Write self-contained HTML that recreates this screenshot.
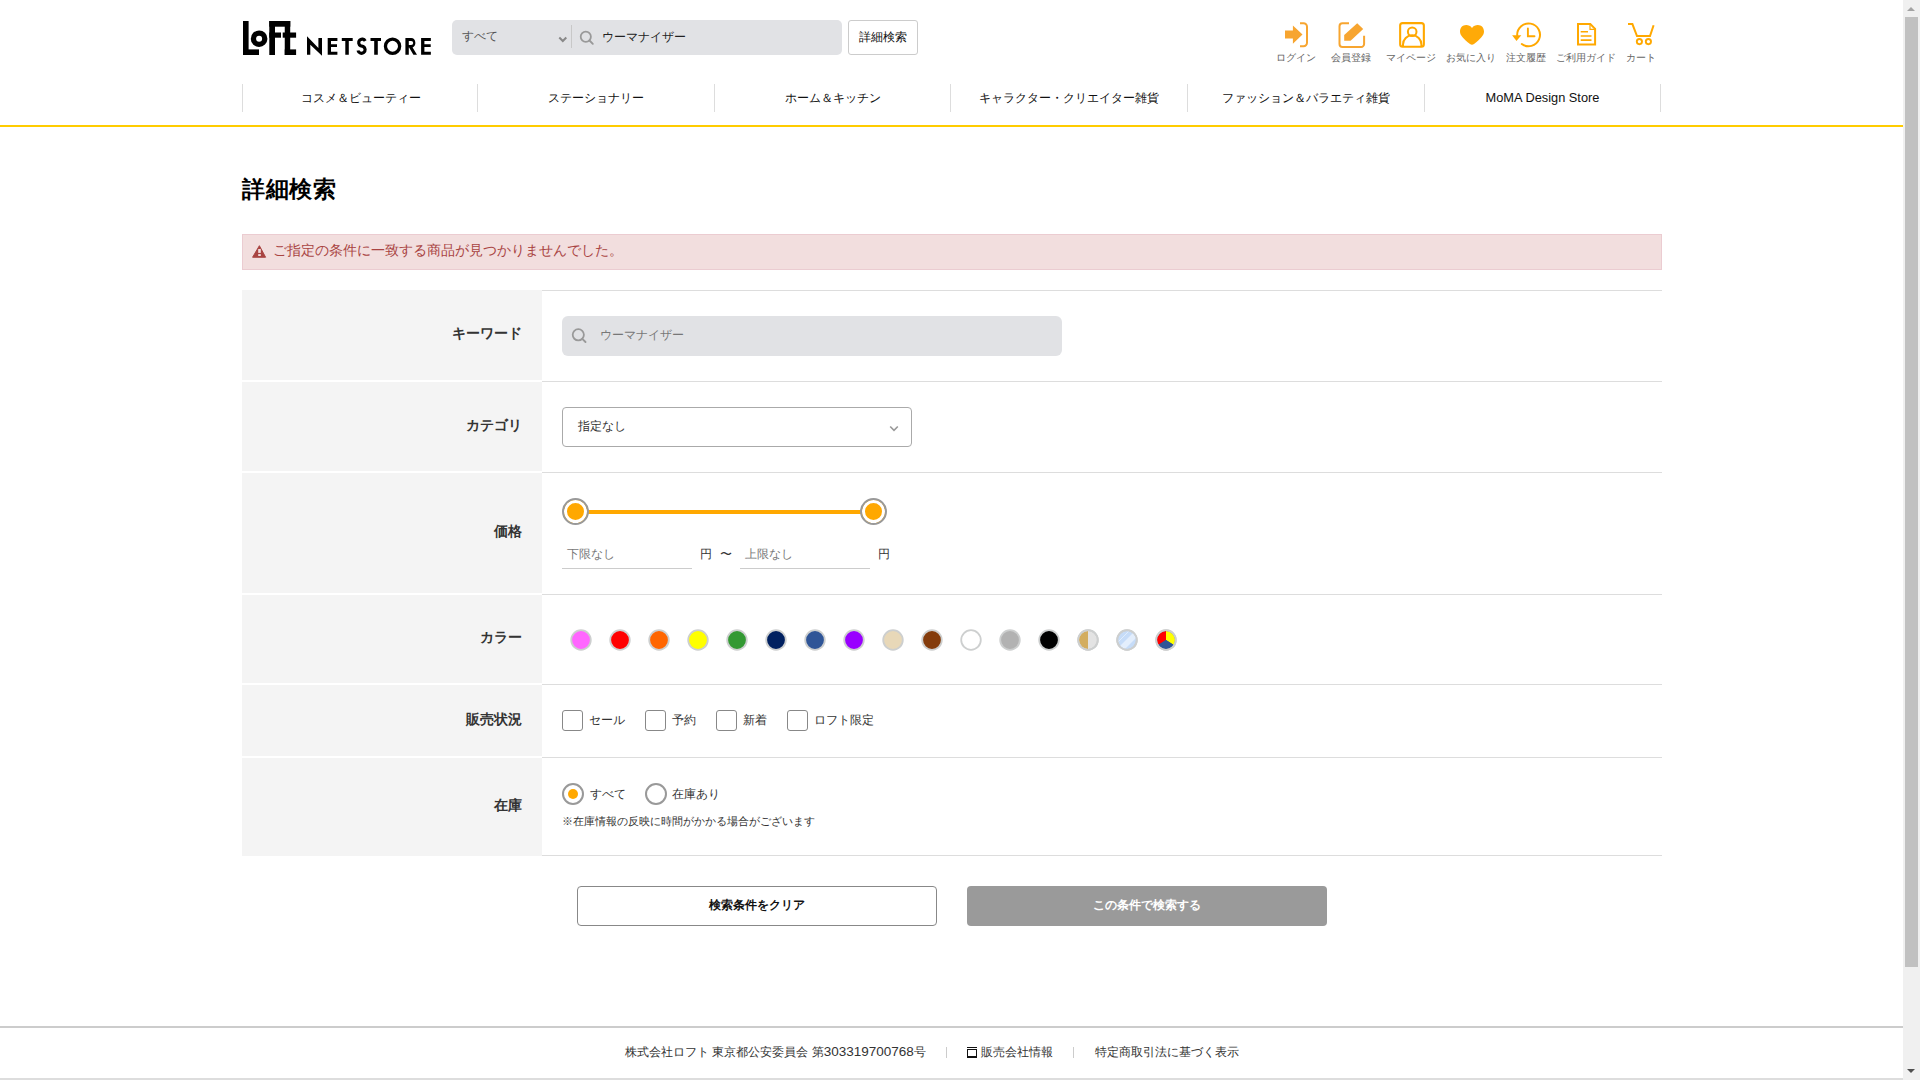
<!DOCTYPE html>
<html lang="ja">
<head>
<meta charset="utf-8">
<title>詳細検索 | ロフト公式通販サイト</title>
<style>
*{box-sizing:border-box;margin:0;padding:0}
html,body{width:1920px;height:1080px;overflow:hidden;background:#fff}
body{font-family:"Liberation Sans",sans-serif;color:#222;position:relative}
.abs{position:absolute}
#sb{position:absolute;left:1903px;top:0;width:17px;height:1080px;background:#f0f0f0}
#sb .thumb{position:absolute;left:2px;top:17px;width:13px;height:950px;background:#c1c1c1}
#sb .up{position:absolute;left:4px;top:7px;width:0;height:0;border-left:4px solid transparent;border-right:4px solid transparent;border-bottom:4px solid #a3a3a3}
#sb .dn{position:absolute;left:4px;top:1069px;width:0;height:0;border-left:4px solid transparent;border-right:4px solid transparent;border-top:4px solid #505050}
/* header */
.search{left:452px;top:20px;width:390px;height:35px;background:#e1e2e5;border-radius:5px}
.search .sel{position:absolute;left:10px;top:0;line-height:33px;font-size:12px;color:#555}
.search .div{position:absolute;left:119px;top:5px;width:1px;height:23px;background:#c8c8c8}
.search .txt{position:absolute;left:150px;top:0;line-height:34px;font-size:12px;color:#222}
.dbtn{left:848px;top:20px;width:70px;height:35px;border:1px solid #ccc;border-radius:3px;font-size:12px;line-height:33px;text-align:center;color:#111}
.ic{top:0;width:60px;height:70px}
.ic svg{position:absolute;left:0;top:0}
.ic span{position:absolute;left:-10px;width:80px;top:50px;font-size:10px;text-align:center;color:#777;line-height:14px;white-space:nowrap}
.nav{left:242px;top:84px;width:1420px;height:28px}
.nav div{position:absolute;top:0;height:28px;border-left:1px solid #ddd;font-size:12px;line-height:28px;text-align:center;color:#111}
.lbl{top:51px;width:80px;font-size:10px;line-height:14px;text-align:center;color:#666;white-space:nowrap}
.yl{left:0;top:125px;width:1903px;height:2px;background:#fc0}
h1{position:absolute;left:242px;top:174px;font-size:23px;line-height:30px;font-weight:bold;color:#000;letter-spacing:.6px}
.alert{left:242px;top:234px;width:1420px;height:36px;background:#f2dede;border:1px solid #ebccd1;color:#a94442;font-size:14px;line-height:31px;padding-left:30px}
.th{left:242px;width:300px;background:#f4f4f4;font-size:14px;font-weight:bold;text-align:right;padding-right:20px;color:#333}
.td{left:542px;width:1120px;border-top:1px solid #ddd}

.kw{left:562px;top:316px;width:500px;height:40px;background:#e1e2e5;border-radius:6px}
.kw span{position:absolute;left:38px;top:0;line-height:39px;font-size:12px;color:#777}
.cat{left:562px;top:407px;width:350px;height:40px;border:1px solid #aaa;border-radius:4px}
.cat span{position:absolute;left:15px;top:0;line-height:36px;font-size:12px;color:#333}
.hdl{width:27px;height:27px;border-radius:50%;border:2px solid #999;background:#ffa800;box-shadow:inset 0 0 0 3px #fff}
.pin{top:544px;width:130px;height:25px;border-bottom:1px solid #ccc;font-size:12px;line-height:20px;padding-left:5px;color:#777}
.yen{top:544px;font-size:12px;line-height:20px;color:#333}
.cb{top:710px;width:21px;height:21px;border:1px solid #888;border-radius:3px;background:#fff}
.cbl{top:710px;font-size:12px;line-height:20px;color:#333}
.rd{top:783px;width:22px;height:22px;border:2px solid #999;border-radius:50%;background:#fff}
.rd i{position:absolute;left:4px;top:4px;width:10px;height:10px;border-radius:50%;background:#ffa800}
.rdl{top:784px;font-size:12px;line-height:20px;color:#333}
.note{left:562px;top:813px;font-size:11px;line-height:16px;color:#333}
.btn1{left:577px;top:886px;width:360px;height:40px;border:1px solid #888;border-radius:4px;font-size:12px;font-weight:bold;text-align:center;line-height:36px;color:#111}
.btn2{left:967px;top:886px;width:360px;height:40px;border-radius:4px;background:#9a9a9a;font-size:12px;font-weight:bold;text-align:center;line-height:38px;color:#fff}
.ft{top:1043px;font-size:12px;line-height:18px;color:#333;white-space:nowrap}
</style>
</head>
<body>
<div id="sb"><div class="up"></div><div class="thumb"></div><div class="dn"></div></div>

<!-- logo -->
<svg class="abs" style="left:0;top:0" width="440" height="70" viewBox="0 0 440 70">
  <g fill="#000">
    <rect x="243" y="21" width="5.6" height="34"/>
    <rect x="243" y="49.4" width="16" height="5.6"/>
    <circle cx="259.1" cy="38.7" r="8.3"/>
    <rect x="269.3" y="21" width="5.7" height="34"/>
    <rect x="269.3" y="21" width="21" height="5.7"/>
    <rect x="269.3" y="32.5" width="11.7" height="5.2"/>
    <rect x="284.75" y="21" width="5.45" height="34"/>
    <rect x="282.7" y="32.5" width="13.4" height="5.2"/>
    <rect x="284.75" y="49.4" width="11.35" height="5.6"/>
  </g>
  <circle cx="259.1" cy="38.7" r="3" fill="#fff"/>
  <g fill="#000">
    <path d="M307 36.3L318.4 48V38.1H322V55.7L310.3 44.7V54.8H307Z"/>
    <path d="M327.7 38.1H337.4V41H331V44.2H337V47H331V51.8H337.4V54.8H327.7Z"/>
    <path d="M341.8 38H352.7V41H348.8V54.8H345.3V41H341.8Z"/>
    <path d="M370.5 38H381V41H377.8V54.8H374.2V41H370.5Z"/>
    <path d="M405.4 38.1H411.2A4.2 4.8 0 0 1 412.6 47.4L417 54.8H413.4L409.1 47.6H408.8V54.8H405.4ZM408.8 40.9V45.1H411.1A2.1 2.1 0 0 0 411.1 40.9Z" fill-rule="evenodd"/>
    <path d="M421.1 38.1H430.85V41H424.4V44.2H430.7V47H424.4V51.8H430.85V54.8H421.1Z"/>
  </g>
  <g fill="none" stroke="#000">
    <path d="M365.2 41A3.45 3.45 0 1 0 360.6 45.7L363.2 46.5A3.6 3.6 0 1 1 358 50.5" stroke-width="3.2"/>
    <circle cx="392.55" cy="46.25" r="7.1" stroke-width="3.3"/>
  </g>
</svg>

<div class="abs search"><span class="sel">すべて</span><svg width="10" height="8" viewBox="0 0 10 8" style="position:absolute;left:105.5px;top:15.5px"><path d="M1.3 1.5l3.5 3.5 3.5-3.5" fill="none" stroke="#888" stroke-width="2"/></svg><div class="div"></div><svg width="20" height="20" viewBox="0 0 20 20" style="position:absolute;left:126px;top:9px"><circle cx="7.8" cy="7.8" r="5.1" fill="none" stroke="#999" stroke-width="1.8"/><path d="M11.5 11.5l3.3 3.3" stroke="#999" stroke-width="1.9" stroke-linecap="round"/></svg><span class="txt">ウーマナイザー</span></div>
<div class="abs dbtn">詳細検索</div>


<svg class="abs" style="left:1270px;top:10px" width="400" height="45" viewBox="1270 10 400 45">
  <g fill="#f7a530">
    <path d="M1285 30.4h7.9v-5l9.6 9.2-9.6 9.2v-5.2h-7.9z"/>
  </g>
  <path d="M1300 23.3h3.5a3.5 3.5 0 0 1 3.5 3.5v15.9a3.5 3.5 0 0 1-3.5 3.5h-3.5" fill="none" stroke="#f7a530" stroke-width="2"/>
  <path d="M1349 23.3h-6.5a3 3 0 0 0-3 3v17.7a3 3 0 0 0 3 3h18.6a3 3 0 0 0 3-3v-8.2" fill="none" stroke="#f7a530" stroke-width="2"/>
  <path d="M1344.2 40.7v-5.6l13-11.9 6 5.9-12.6 11.6z" fill="#f7a530"/>
  <rect x="1400.15" y="23.1" width="23.7" height="23.65" rx="2.5" fill="none" stroke="#ffa800" stroke-width="2.1"/>
  <circle cx="1412.2" cy="31.8" r="4.3" fill="none" stroke="#ffa800" stroke-width="2"/>
  <path d="M1403 46.5v-2a9.2 9.2 0 0 1 18.4 0v2" fill="none" stroke="#ffa800" stroke-width="2"/>
  <path d="M1472 28C1470.5 25.8 1468.5 25 1466.2 25C1462.5 25 1460 27.8 1460 31.5C1460 35.5 1463.5 38.8 1470 44C1471.3 45 1472.7 45 1474 44C1480.5 38.8 1484 35.5 1484 31.5C1484 27.8 1481.5 25 1477.8 25C1475.5 25 1473.5 25.8 1472 28Z" fill="#ffaa08"/>
  <path d="M1517.2 35.3A11.4 11.4 0 1 1 1521.8 44" fill="none" stroke="#ffa800" stroke-width="2" stroke-linecap="round"/>
  <path d="M1512.1 35.2H1521.3L1516.5 40.9z" fill="#ffa800"/>
  <path d="M1527.9 28.4v7.9h6.6" fill="none" stroke="#ffa800" stroke-width="1.9" stroke-linecap="round"/>
  <path d="M1578 24.1h12.3l4.8 4.8v15.7h-17.1z" fill="none" stroke="#ffa800" stroke-width="2"/>
  <path d="M1590 24v5.3h5.2" fill="none" stroke="#ffa800" stroke-width="1.2"/>
  <path d="M1580.7 31.8h7.3M1580.7 36h10.8M1580.7 40.1h10.8" stroke="#ffa800" stroke-width="1.6"/>
  <path d="M1628 24.1h4.4l4.6 11.9h13l3.6-10.8" fill="none" stroke="#ffa800" stroke-width="2"/>
  <circle cx="1639.4" cy="41.6" r="2.6" fill="none" stroke="#ffa800" stroke-width="1.9"/>
  <circle cx="1648.4" cy="41.6" r="2.6" fill="none" stroke="#ffa800" stroke-width="1.9"/>
</svg>
<div class="abs lbl" style="left:1256px">ログイン</div>
<div class="abs lbl" style="left:1311px">会員登録</div>
<div class="abs lbl" style="left:1371px">マイページ</div>
<div class="abs lbl" style="left:1431px">お気に入り</div>
<div class="abs lbl" style="left:1486px">注文履歴</div>
<div class="abs lbl" style="left:1546px">ご利用ガイド</div>
<div class="abs lbl" style="left:1601px">カート</div>

<div class="abs nav">
  <div style="left:0;width:236px">コスメ＆ビューティー</div>
  <div style="left:235px;width:237px">ステーショナリー</div>
  <div style="left:472px;width:236px">ホーム＆キッチン</div>
  <div style="left:708px;width:237px">キャラクター・クリエイター雑貨</div>
  <div style="left:945px;width:237px">ファッション＆バラエティ雑貨</div>
  <div style="left:1182px;width:237px;border-right:1px solid #ddd"><span style="font-size:12.8px">MoMA Design Store</span></div>
</div>
<div class="abs yl"></div>

<h1>詳細検索</h1>
<div class="abs alert"><svg width="16" height="15" viewBox="0 0 16 15" style="position:absolute;left:9px;top:10px"><path d="M7.4 0.7L13.6 12.25H0.6z" fill="#a94442" stroke="#a94442" stroke-width="1" stroke-linejoin="round"/><rect x="6.2" y="4" width="2.6" height="3.9" fill="#f2dede"/><rect x="6.2" y="9.1" width="2.6" height="1.9" fill="#f2dede"/></svg>ご指定の条件に一致する商品が見つかりませんでした。</div>

<div class="abs th" style="top:290px;height:90px;line-height:86px">キーワード</div>
<div class="abs td" style="top:290px;height:91px"></div>
<div class="abs th" style="top:382px;height:89px;line-height:86px">カテゴリ</div>
<div class="abs td" style="top:381px;height:91px"></div>
<div class="abs th" style="top:473px;height:120px;line-height:116px">価格</div>
<div class="abs td" style="top:472px;height:122px"></div>
<div class="abs th" style="top:595px;height:88px;line-height:84px">カラー</div>
<div class="abs td" style="top:594px;height:90px"></div>
<div class="abs th" style="top:685px;height:71px;line-height:68px">販売状況</div>
<div class="abs td" style="top:684px;height:73px"></div>
<div class="abs th" style="top:758px;height:98px;line-height:94px">在庫</div>
<div class="abs td" style="top:757px;height:99px;border-bottom:1px solid #ddd"></div>


<!-- keyword -->
<div class="abs kw"><svg width="20" height="20" viewBox="0 0 20 20" style="position:absolute;left:8px;top:10px"><circle cx="8.3" cy="8.8" r="5.6" fill="none" stroke="#999" stroke-width="1.8"/><path d="M12.3 12.8l3.2 3.2" stroke="#999" stroke-width="1.9" stroke-linecap="round"/></svg><span>ウーマナイザー</span></div>
<!-- category -->
<div class="abs cat"><span>指定なし</span><svg width="10" height="8" viewBox="0 0 10 8" style="position:absolute;left:326px;top:17px"><path d="M1.2 1.5l3.8 3.8 3.8-3.8" fill="none" stroke="#999" stroke-width="1.6"/></svg></div>
<!-- price -->
<div class="abs" style="left:575px;top:510px;width:298px;height:4px;background:#ffa800"></div>
<div class="abs hdl" style="left:562px;top:498px"></div>
<div class="abs hdl" style="left:860px;top:498px"></div>
<div class="abs pin" style="left:562px">下限なし</div>
<div class="abs yen" style="left:700px">円</div>
<div class="abs yen" style="left:720px">〜</div>
<div class="abs pin" style="left:740px">上限なし</div>
<div class="abs yen" style="left:878px">円</div>
<!-- colors -->
<svg class="abs" style="left:560px;top:620px" width="630" height="40" viewBox="560 620 630 40">
  <defs>
    <clipPath id="cc"><circle cx="1088" cy="640" r="9"/></clipPath>
    <clipPath id="cl"><circle cx="1127" cy="640" r="9"/></clipPath>
    <clipPath id="ct"><circle cx="1166" cy="640" r="9"/></clipPath>
  </defs>
  <g stroke="#cdcfcf" stroke-width="1.8">
    <circle cx="581" cy="640" r="9.8" fill="#ff66ff"/>
    <circle cx="620" cy="640" r="9.8" fill="#ff0000"/>
    <circle cx="659" cy="640" r="9.8" fill="#ff6600"/>
    <circle cx="698" cy="640" r="9.8" fill="#ffff00"/>
    <circle cx="737" cy="640" r="9.8" fill="#339933"/>
    <circle cx="776" cy="640" r="9.8" fill="#002060"/>
    <circle cx="815" cy="640" r="9.8" fill="#2f5597"/>
    <circle cx="854" cy="640" r="9.8" fill="#9900ff"/>
    <circle cx="893" cy="640" r="9.8" fill="#e8d8b8"/>
    <circle cx="932" cy="640" r="9.8" fill="#843c0c"/>
    <circle cx="971" cy="640" r="9.8" fill="#ffffff"/>
    <circle cx="1010" cy="640" r="9.8" fill="#b2b2b2"/>
    <circle cx="1049" cy="640" r="9.8" fill="#000000"/>
    <circle cx="1088" cy="640" r="9.8" fill="#e3e3e3"/>
    <circle cx="1127" cy="640" r="9.8" fill="#c6dcf8"/>
    <circle cx="1166" cy="640" r="9.8" fill="#2f5597"/>
  </g>
  <rect x="1078" y="630" width="10" height="20" fill="#d3ad5f" clip-path="url(#cc)"/>
  <g clip-path="url(#cl)" stroke="#e3eefc"><path d="M1132 628L1108 652" stroke-width="0.9"/><path d="M1142 628L1118 652" stroke-width="5.7"/></g>
  <g clip-path="url(#ct)"><path d="M1166 640V630H1150V650z" fill="#ff0000"/><path d="M1166 640V630H1182V650z" fill="#ffff00"/><path d="M1166 640L1150 650H1182z" fill="#2f5597"/></g>
  <circle cx="1088" cy="640" r="9.8" fill="none" stroke="#cdcfcf" stroke-width="1.8"/>
  <circle cx="1127" cy="640" r="9.8" fill="none" stroke="#cdcfcf" stroke-width="1.8"/>
  <circle cx="1166" cy="640" r="9.8" fill="none" stroke="#cdcfcf" stroke-width="1.8"/>
</svg>
<!-- checkboxes -->
<div class="abs cb" style="left:562px"></div><div class="abs cbl" style="left:589px">セール</div>
<div class="abs cb" style="left:645px"></div><div class="abs cbl" style="left:672px">予約</div>
<div class="abs cb" style="left:716px"></div><div class="abs cbl" style="left:743px">新着</div>
<div class="abs cb" style="left:787px"></div><div class="abs cbl" style="left:814px">ロフト限定</div>
<!-- radios -->
<div class="abs rd" style="left:562px"><i></i></div><div class="abs rdl" style="left:590px">すべて</div>
<div class="abs rd" style="left:645px"></div><div class="abs rdl" style="left:672px">在庫あり</div>
<div class="abs note">※在庫情報の反映に時間がかかる場合がございます</div>
<!-- buttons -->
<div class="abs btn1">検索条件をクリア</div>
<div class="abs btn2">この条件で検索する</div>
<!-- footer -->
<div class="abs" style="left:0;top:1026px;width:1903px;height:2px;background:#ccc"></div>
<div class="abs" style="left:0;top:1078px;width:1903px;height:2px;background:#ddd"></div>
<div class="abs ft" style="left:625px">株式会社ロフト 東京都公安委員会 第<span style="font-size:13.5px">303319700768</span>号</div>
<div class="abs" style="left:946px;top:1047px;width:1px;height:11px;background:#ccc"></div>
<div class="abs" style="left:967px;top:1047px;width:10px;height:1px;background:#111"></div><div class="abs" style="left:967px;top:1049px;width:10px;height:9px;border:1px solid #111;border-bottom-width:2px"></div>
<div class="abs ft" style="left:981px">販売会社情報</div>
<div class="abs" style="left:1073px;top:1047px;width:1px;height:11px;background:#ccc"></div>
<div class="abs ft" style="left:1095px">特定商取引法に基づく表示</div>
</body>
</html>
